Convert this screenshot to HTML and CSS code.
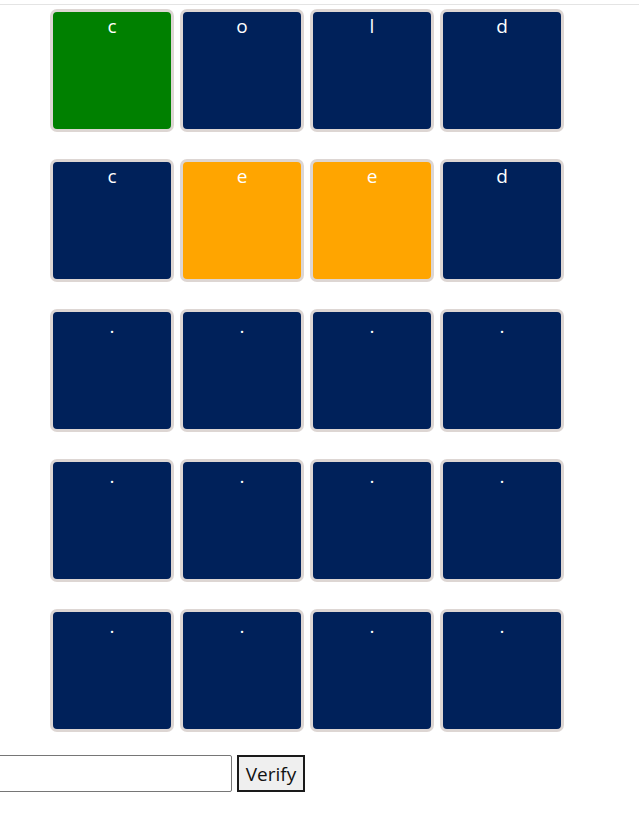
FILE: index.html
```html
<!DOCTYPE html>
<html>
<head>
<meta charset="utf-8">
<link rel="stylesheet" href="styles.css">
</head>
<body>
<div class="topline"></div>
<div class="board">
  <div class="tile green">c</div><div class="tile">o</div><div class="tile">l</div><div class="tile">d</div>
  <div class="tile">c</div><div class="tile orange">e</div><div class="tile orange">e</div><div class="tile">d</div>
  <div class="tile">.</div><div class="tile">.</div><div class="tile">.</div><div class="tile">.</div>
  <div class="tile">.</div><div class="tile">.</div><div class="tile">.</div><div class="tile">.</div>
  <div class="tile">.</div><div class="tile">.</div><div class="tile">.</div><div class="tile">.</div>
</div>
<div class="controls">
  <input class="guess" type="text">
  <button class="verify">Verify</button>
</div>
</body>
</html>
```
FILE: styles.css
```css
html, body {
  margin: 0;
  padding: 0;
  background: #ffffff;
  overflow: hidden;
}
body {
  font-family: "Open Sans", "Noto Sans", sans-serif;
}
.topline {
  height: 4px;
  border-bottom: 1px solid #e4e4e4;
}
.board {
  display: grid;
  grid-template-columns: repeat(4, 124px);
  grid-auto-rows: 123px;
  column-gap: 6px;
  row-gap: 27px;
  padding: 4px 0 0 50px;
}
.tile {
  box-sizing: border-box;
  background: #00215a;
  border: 3px solid #ddd6d3;
  border-radius: 7px;
  color: #ffffff;
  font-size: 19px;
  line-height: 29px;
  text-align: center;
}
.tile.green { background: #008000; }
.tile.orange { background: #ffa500; }
.controls {
  display: flex;
  align-items: center;
  gap: 5px;
  margin-top: 23px;
}
.guess {
  box-sizing: border-box;
  width: 250px;
  height: 37px;
  margin: 0 0 0 -18px;
  border: 1px solid #767676;
  border-radius: 2px;
  padding: 0 4px;
  font-size: 18px;
}
.verify {
  box-sizing: border-box;
  height: 37px;
  width: 68px;
  margin: 0;
  padding: 0;
  border: 2px solid #1a1a1a;
  background: #efefef;
  font-family: "Open Sans", "Noto Sans", sans-serif;
  font-size: 19px;
  color: #111;
}
```
